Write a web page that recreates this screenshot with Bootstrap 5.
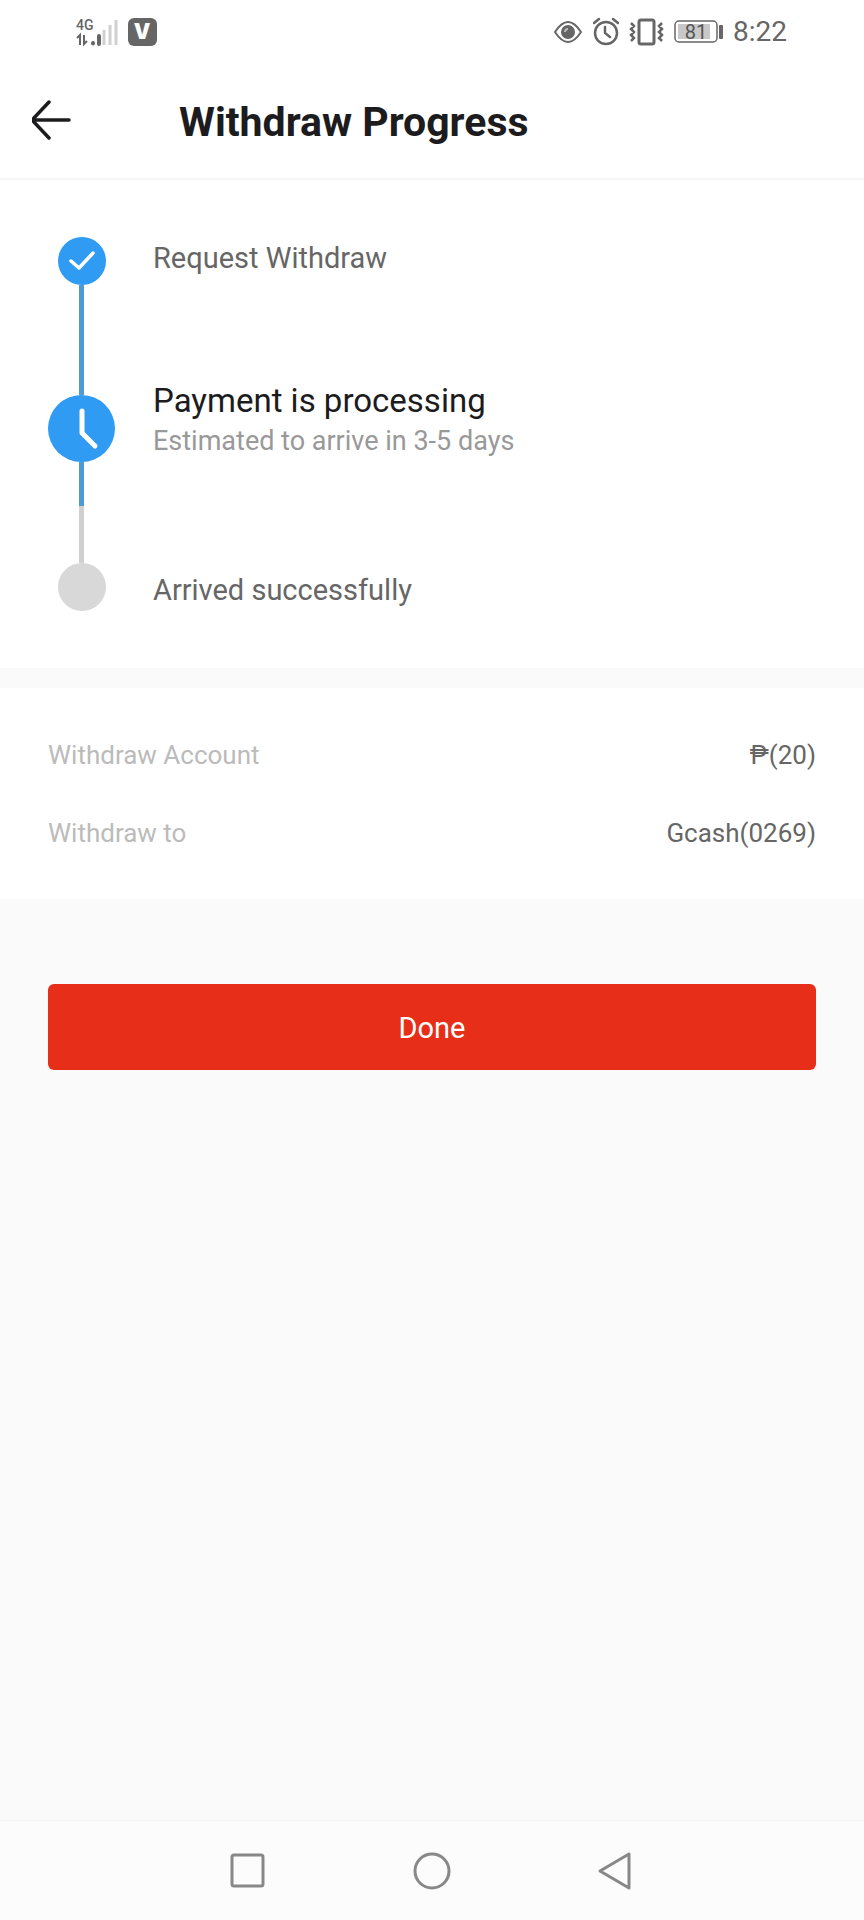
<!DOCTYPE html>
<html lang="en">
<head>
<meta charset="utf-8">
<meta name="viewport" content="width=device-width, initial-scale=1">
<title>Withdraw Progress</title>
<link href="https://cdn.jsdelivr.net/npm/bootstrap@5.3.0/dist/css/bootstrap.min.css" rel="stylesheet">
<style>
  body { font-family: Roboto, "Noto Sans", sans-serif; background: #fafafa; color: #666; font-size: 29px; line-height: 42px; }
  svg { display: block; flex: none; }
  .status-bar { height: 64px; padding: 0 77px 0 76px; color: #666; }
  .status-icons { gap: 10px; }
  .status-time { font-size: 28px; }
  .app-header { height: 116px; padding: 0 32px; border-bottom: 2px solid #f5f5f5; }
  .back-btn { width: 40px; color: #1c1c1e; }
  .page-title { margin-left: 107px; padding-top: 2px; font-size: 41px; line-height: 48px; font-weight: 700; color: #1c1c1e; }
  .steps { padding: 57px 48px; }
  .step { gap: 38px; }
  .step-first { min-height: 135px; }
  .step-last { min-height: 105px; }
  .rail { width: 67px; }
  .rail-line { width: 5px; background: #4d9bd3; }
  .rail-lead { height: 23px; }
  .rail-tail { height: 44px; }
  .rail-pending { background: #d0d0d0; }
  .dot { width: 48px; height: 48px; background: #2f9bf3; }
  .dot-current { width: 67px; height: 67px; }
  .dot-pending { background: #d8d8d8; }
  .step-current-text { padding-top: 9px; line-height: 40px; }
  .step-name { font-size: 33px; color: #1c1c1e; }
  .step-note { font-size: 27px; color: #999; }
  .details { margin-top: 20px; padding: 47px 48px 46px; gap: 38px; font-size: 26px; line-height: 40px; }
  .details dt { font-weight: 400; color: #bbb; }
  .actions { padding: 85px 48px; }
  .btn-done { --bs-btn-color: #fff; --bs-btn-bg: #e62e18; --bs-btn-hover-color: #fff; --bs-btn-hover-bg: #cf2814; --bs-btn-active-bg: #cf2814;
    --bs-btn-border-width: 0; --bs-btn-border-radius: 6px; --bs-btn-font-size: 29px; --bs-btn-padding-y: 0; height: 86px; padding-top: 3px; }
  .system-nav { height: 100px; padding: 0 155px; background: #fcfcfc; border-top: 1px solid #f4f4f4; }
</style>
</head>
<body class="d-flex flex-column min-vh-100">
  <div class="status-bar bg-white d-flex align-items-center justify-content-between">
    <div class="status-icons d-flex align-items-center">
      <svg width="42" height="32" viewBox="0 0 42 32" role="img" aria-label="4G signal">
        <text x="0" y="14" font-family="Roboto" font-size="14" font-weight="500" fill="#666">4G</text>
        <path d="M1 22l3-3v10M8 19v9l3-3" fill="none" stroke="#666" stroke-width="2"/>
        <path d="M17 27v.5M23 20v8" stroke="#666" stroke-width="4" stroke-linecap="round"/>
        <path d="M29 14v15M35 9v20M41 4v25" stroke="#d0d0d0" stroke-width="3" transform="translate(-1)"/>
      </svg>
      <svg width="29" height="30" viewBox="0 0 29 30" role="img" aria-label="V">
        <rect x="0" y="1" width="29" height="28" rx="6" fill="#666"/>
        <text x="14" y="22" text-anchor="middle" font-family="Inter, sans-serif" font-size="21" font-weight="900" fill="#fff">V</text>
      </svg>
    </div>
    <div class="status-icons d-flex align-items-center">
      <svg width="30" height="32" viewBox="0 0 30 32" fill="none" stroke="#666" stroke-width="2">
        <path d="M2 16Q15-4 28 16Q15 36 2 16z"/><circle cx="15" cy="16" r="6" fill="#666"/><path d="M12 16q0-3 3-3" stroke="#bbb"/>
      </svg>
      <svg width="26" height="32" viewBox="0 0 26 32" fill="none" stroke="#666" stroke-width="2.5" stroke-linecap="round">
        <circle cx="13" cy="17" r="11"/><path d="M1 7l5-4M25 7l-5-4M12 11v6l5 4"/>
      </svg>
      <svg width="35" height="32" viewBox="0 0 35 32" fill="none" stroke="#666" stroke-width="2.5">
        <rect x="10" y="4" width="15" height="24" rx="2" stroke-width="3"/>
        <path d="M2 7l3 3-3 3 3 3-3 3 3 3-3 3M33 7l-3 3 3 3-3 3 3 3-3 3 3 3"/>
      </svg>
      <svg width="49" height="32" viewBox="0 0 49 32" role="img" aria-label="Battery 81">
        <rect x="1" y="5" width="42" height="21" rx="4" fill="#fff" stroke="#666" stroke-width="1.5"/>
        <rect x="4" y="8" width="32" height="15" fill="#c8c8c8"/>
        <rect x="45" y="9" width="4" height="14" rx="1" fill="#666"/>
        <text x="22" y="23" text-anchor="middle" font-family="Roboto" font-size="20" fill="#555">81</text>
      </svg>
      <span class="status-time">8:22</span>
    </div>
  </div>

  <header class="app-header bg-white d-flex align-items-center">
    <button type="button" class="back-btn btn p-0 border-0" aria-label="Back">
      <svg width="40" height="44" viewBox="0 0 40 44" fill="none" stroke="currentColor" stroke-width="3.5" stroke-linecap="round" stroke-linejoin="round"><path d="M38 21H2M18 3L1 21L18 39" transform="translate(-1)"/></svg>
    </button>
    <h1 class="page-title mb-0">Withdraw Progress</h1>
  </header>

  <main class="flex-grow-1">
    <ol class="steps list-unstyled bg-white mb-0">
      <li class="step step-first d-flex">
        <div class="rail d-flex flex-column align-items-center">
          <div class="dot rounded-circle d-flex align-items-center justify-content-center">
            <svg width="28" height="28" viewBox="0 0 28 28" fill="none" stroke="#fff" stroke-width="3.5" stroke-linecap="round" stroke-linejoin="round"><path d="M3 14l8 7L25 6"/></svg>
          </div>
          <div class="rail-line flex-grow-1"></div>
        </div>
        <div>Request Withdraw</div>
      </li>
      <li class="step d-flex">
        <div class="rail d-flex flex-column align-items-center">
          <div class="rail-line rail-lead"></div>
          <div class="dot dot-current rounded-circle d-flex align-items-center justify-content-center">
            <svg width="67" height="67" viewBox="0 0 67 67" fill="none" stroke="#fff" stroke-width="5" stroke-linecap="round" stroke-linejoin="round"><path d="M34 16v22l13 13"/></svg>
          </div>
          <div class="rail-line rail-tail"></div>
        </div>
        <div class="step-current-text">
          <div class="step-name">Payment is processing</div>
          <div class="step-note">Estimated to arrive in 3-5 days</div>
        </div>
      </li>
      <li class="step step-last d-flex">
        <div class="rail d-flex flex-column align-items-center">
          <div class="rail-line rail-pending flex-grow-1"></div>
          <div class="dot dot-pending rounded-circle"></div>
        </div>
        <div class="align-self-end">Arrived successfully</div>
      </li>
    </ol>

    <dl class="details bg-white d-flex flex-column mb-0">
      <div class="d-flex justify-content-between"><dt>Withdraw Account</dt><dd class="mb-0">₱(20)</dd></div>
      <div class="d-flex justify-content-between"><dt>Withdraw to</dt><dd class="mb-0">Gcash(0269)</dd></div>
    </dl>

    <div class="actions">
      <button type="button" class="btn btn-done w-100">Done</button>
    </div>
  </main>

  <nav class="system-nav d-flex align-items-center justify-content-around" aria-label="System">
    <button type="button" class="btn p-0 border-0" aria-label="Recent apps"><svg width="40" height="40" viewBox="0 0 40 40" fill="none" stroke="#888" stroke-width="3"><rect x="5" y="4" width="31" height="31" rx="2"/></svg></button>
    <button type="button" class="btn p-0 border-0" aria-label="Home"><svg width="40" height="40" viewBox="0 0 40 40" fill="none" stroke="#888" stroke-width="3"><circle cx="20" cy="20" r="17"/></svg></button>
    <button type="button" class="btn p-0 border-0" aria-label="Back"><svg width="40" height="40" viewBox="0 0 40 40" fill="none" stroke="#888" stroke-width="3" stroke-linejoin="round"><path d="M32 3v34L3 20z"/></svg></button>
  </nav>
<script src="https://cdn.jsdelivr.net/npm/bootstrap@5.3.0/dist/js/bootstrap.bundle.min.js"></script>
</body>
</html>
